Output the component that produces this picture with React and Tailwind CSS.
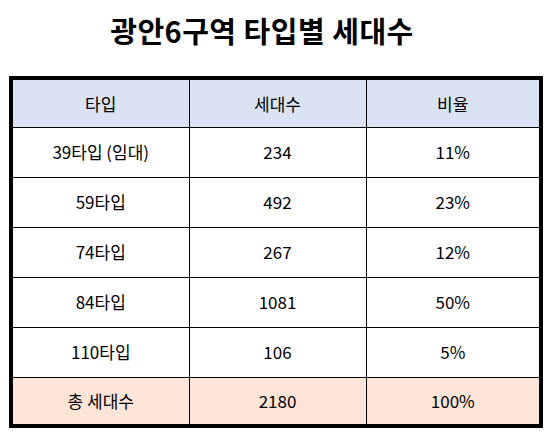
const ROWS = [
  { type: "39타입 (임대)", count: "234", ratio: "11%" },
  { type: "59타입", count: "492", ratio: "23%" },
  { type: "74타입", count: "267", ratio: "12%" },
  { type: "84타입", count: "1081", ratio: "50%" },
  { type: "110타입", count: "106", ratio: "5%" },
];

const FONT = { fontFamily: '"Noto Sans CJK KR", "Noto Sans", sans-serif' };

export default function App() {
  return (
    <div className="h-[445px] w-[554px] bg-white text-black" style={FONT}>
      <h1 className="flex h-[60px] items-center justify-center pt-[2px] pr-[30px] text-[29px] font-bold tracking-[0.5px]">
        광안6구역 타입별 세대수
      </h1>
      <div className="pt-[16px] pl-[9px]">
        <table className="w-[534px] table-fixed border-collapse border-[4px] border-black text-center text-[17px]">
          <thead>
            <tr className="h-[49px] bg-[#dae3f3]">
              <th className="w-[178px] border border-black font-normal">타입</th>
              <th className="w-[177px] border border-black font-normal">세대수</th>
              <th className="border border-black font-normal">비율</th>
            </tr>
          </thead>
          <tbody>
            {ROWS.map((row) => (
              <tr key={row.type} className="h-[50px]">
                <td className="border border-black">{row.type}</td>
                <td className="border border-black">{row.count}</td>
                <td className="border border-black">{row.ratio}</td>
              </tr>
            ))}
            <tr className="h-[49px] bg-[#fce4d6]">
              <td className="border border-black">총 세대수</td>
              <td className="border border-black">2180</td>
              <td className="border border-black">100%</td>
            </tr>
          </tbody>
        </table>
      </div>
    </div>
  );
}
